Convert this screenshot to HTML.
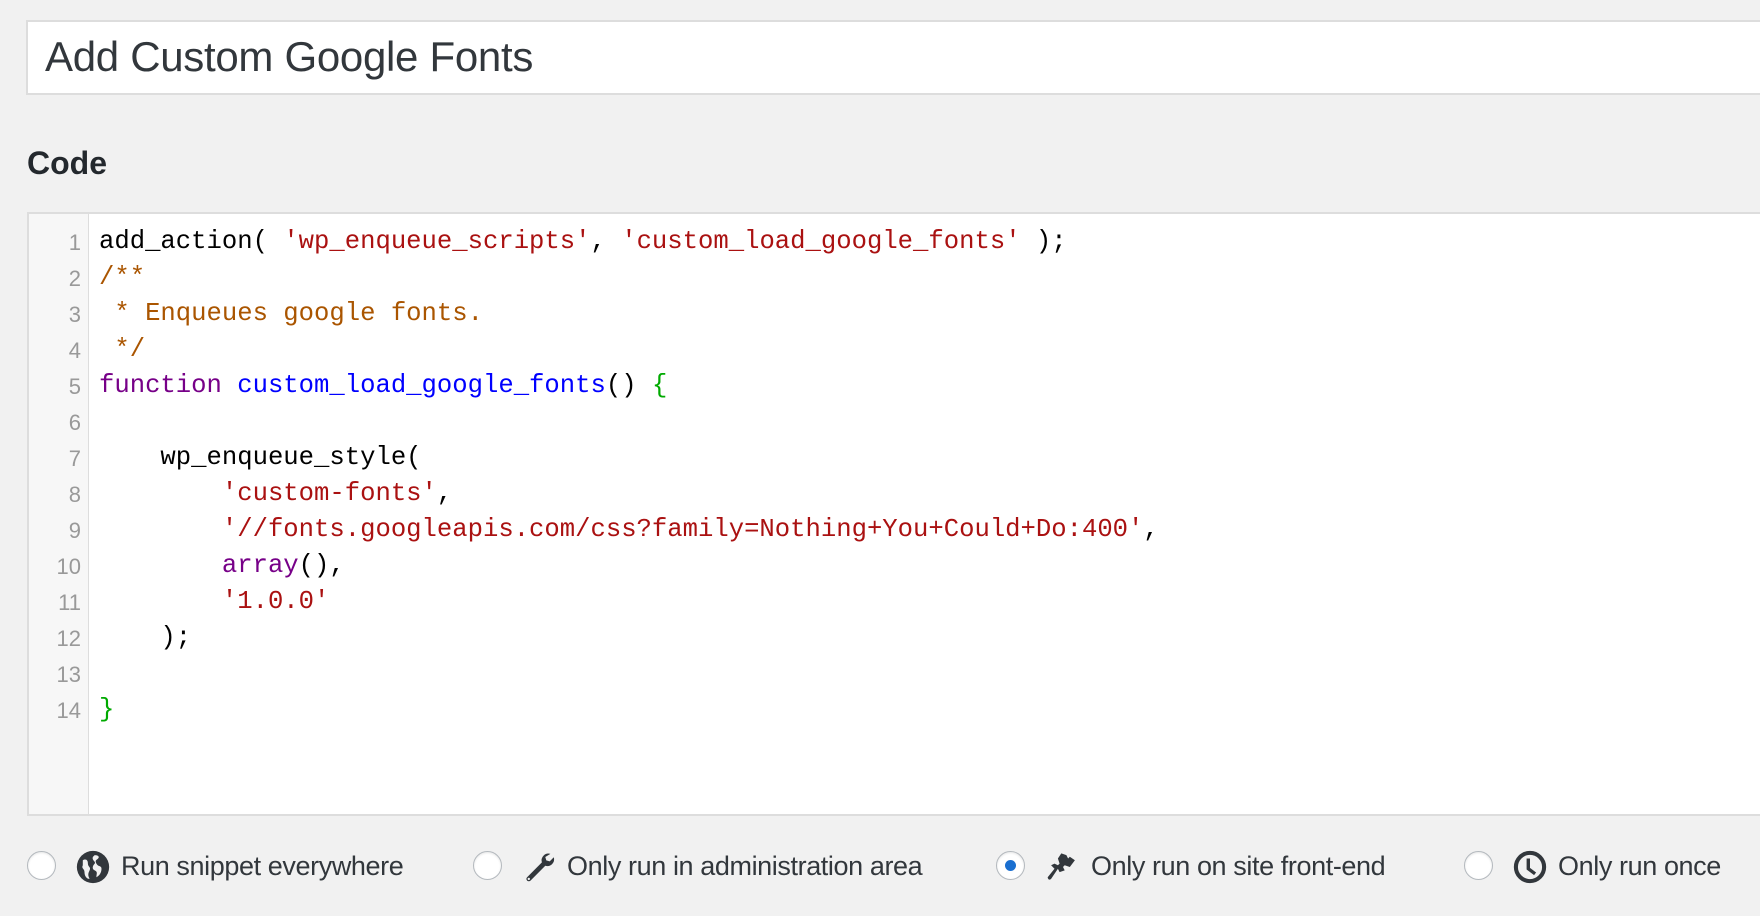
<!DOCTYPE html>
<html><head><meta charset="utf-8"><style>
html,body{margin:0;padding:0;width:1760px;height:916px;overflow:hidden;background:#f1f1f1;font-family:"Liberation Sans",Arial,sans-serif}
.title{position:absolute;left:26px;top:20px;width:1760px;height:71px;background:#fff;border:2px solid #ddd;}
.title span{position:absolute;left:17px;top:11px;font-size:42px;color:#32373c;letter-spacing:-0.3px}
.h{position:absolute;left:27px;top:145px;font-size:32px;font-weight:bold;color:#23282d}
.ed{position:absolute;left:27px;top:212px;width:1760px;height:600px;background:#fff;border:2px solid #ddd;border-right:none}
.gut{position:absolute;left:0;top:0;width:59px;height:100%;background:#f7f7f7;border-right:1px solid #ddd}
.ln{position:absolute;right:7px;width:50px;text-align:right;color:#999;font:22px "Liberation Sans",sans-serif;}
.code{position:absolute;left:70px;top:10px;font:25.6px/36px "Liberation Mono",monospace;color:#000;white-space:pre}
.s{color:#a11}.c{color:#a50}.k{color:#708}.d{color:#00f}.b{color:#0a0}
.r{position:absolute;top:851px;width:29px;height:29px;border-radius:50%;border:1px solid #b4b9be;background:#fff;box-sizing:border-box;box-shadow:inset 0 1px 2px rgba(0,0,0,.1)}
.r.on::after{content:"";position:absolute;left:8px;top:8px;width:11px;height:11px;border-radius:50%;background:#1e8cbe;background:#1a6fd0}
.t{position:absolute;top:851px;font-size:27px;color:#32373c;line-height:30px;letter-spacing:-0.4px}
.ic{position:absolute;top:850px}
</style></head><body>
<div class="title"><span>Add Custom Google Fonts</span></div>
<div class="h">Code</div>
<div class="ed">
<div class="gut">
<div class="ln" style="top:16px">1</div><div class="ln" style="top:52px">2</div><div class="ln" style="top:88px">3</div><div class="ln" style="top:124px">4</div><div class="ln" style="top:160px">5</div><div class="ln" style="top:196px">6</div><div class="ln" style="top:232px">7</div><div class="ln" style="top:268px">8</div><div class="ln" style="top:304px">9</div><div class="ln" style="top:340px">10</div><div class="ln" style="top:376px">11</div><div class="ln" style="top:412px">12</div><div class="ln" style="top:448px">13</div><div class="ln" style="top:484px">14</div>
</div>
<div class="code">add_action( <span class="s">'wp_enqueue_scripts'</span>, <span class="s">'custom_load_google_fonts'</span> );
<span class="c">/**</span>
<span class="c"> * Enqueues google fonts.</span>
<span class="c"> */</span>
<span class="k">function</span> <span class="d">custom_load_google_fonts</span>() <span class="b">{</span>

    wp_enqueue_style(
        <span class="s">'custom-fonts'</span>,
        <span class="s">'//fonts.googleapis.com/css?family=Nothing+You+Could+Do:400'</span>,
        <span class="k">array</span>(),
        <span class="s">'1.0.0'</span>
    );

<span class="b">}</span></div>
</div>

<div class="r" style="left:27px"></div>
<svg class="ic" style="left:76px" width="34" height="34" viewBox="0 0 20 20"><circle cx="10" cy="10" r="9.5" fill="#32373c"/><path d="M4 6c2-1 3 0 3 2s2 2 1 4-1 3 0 5c-2 0-3-2-3-4s-2-2-1-4zM11 3c2 0 3 1 2 2s-2 1-1 3 3 1 3 3-1 4-3 5c0-2 1-3-1-4s-1-3 0-4-2-2-1-4z" fill="#f1f1f1"/></svg>
<div class="t" style="left:121px">Run snippet everywhere</div>

<div class="r" style="left:473px"></div>
<svg class="ic" style="left:522px" width="34" height="34" viewBox="0 0 20 20"><path d="M16.7 2.3a4 4 0 0 0-5 5L3 16a1.4 1.4 0 0 0 2 2l8.7-8.7a4 4 0 0 0 5-5l-2.4 2.4-2-.6-.6-2z" fill="#32373c"/><circle cx="4" cy="17" r=".7" fill="#f1f1f1"/></svg>
<div class="t" style="left:567px">Only run in administration area</div>

<div class="r on" style="left:996px"></div>
<svg class="ic" style="left:1045px" width="36" height="34" viewBox="0 0 20 20"><path d="M9 2l3 1 1 2 1-1 3 2-3 4-3-1-1 1 1 2-3 1-1-2-4 6c-1 1-2 0-2-1l4-5-2-2 2-1 2 1 1-1-1-3z" fill="#32373c"/></svg>
<div class="t" style="left:1091px">Only run on site front-end</div>

<div class="r" style="left:1464px"></div>
<svg class="ic" style="left:1513px" width="34" height="34" viewBox="0 0 20 20"><circle cx="10" cy="10" r="8.3" fill="none" stroke="#32373c" stroke-width="2.4"/><path d="M9 5v6l4 3" fill="none" stroke="#32373c" stroke-width="2"/></svg>
<div class="t" style="left:1558px">Only run once</div>
</body></html>
